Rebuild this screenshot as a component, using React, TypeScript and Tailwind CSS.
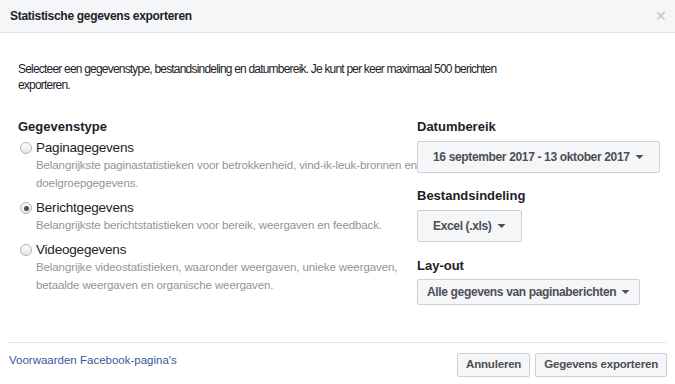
const font = { fontFamily: '"Liberation Sans", Arial, sans-serif' };

function Caret() {
  return (
    <svg width="9" height="6" viewBox="0 0 9 6" className="ml-[5px] inline-block shrink-0">
      <path d="M0.5 1 L8.5 1 L4.5 5 Z" fill="#4b4f56" />
    </svg>
  );
}

function Radio({ checked }: { checked?: boolean }) {
  return (
    <span className="mt-[3px] flex h-[12px] w-[12px] shrink-0 items-center justify-center rounded-full border border-[#b0b3b8] bg-gradient-to-b from-[#fdfdfd] to-[#e4e6e9]">
      {checked && <span className="h-[5px] w-[5px] rounded-full bg-[#4b4f56]" />}
    </span>
  );
}

function Option({ label, desc, checked }: { label: string; desc: string; checked?: boolean }) {
  return (
    <div className="flex gap-[4px]">
      <Radio checked={checked} />
      <div>
        <div className="text-[13.5px] leading-[17px] tracking-[-0.2px] text-[#1d2129]">{label}</div>
        <div className="text-[11.5px] leading-[18px] tracking-[-0.1px] text-[#90949c]">{desc}</div>
      </div>
    </div>
  );
}

function Select({ children, tall }: { children: string; tall?: boolean }) {
  return (
    <div
      className={`inline-flex items-center whitespace-nowrap rounded-[2px] border border-[#ced0d4] bg-[#f5f6f7] text-[12px] font-bold tracking-[-0.35px] text-[#4b4f56] ${
        tall ? "h-[32px] px-[15px]" : "h-[26px] px-[9px]"
      }`}
    >
      {children}
      <Caret />
    </div>
  );
}

const heading = "text-[13px] font-bold leading-[16px] text-[#1d2129]";
const button =
  "h-[24px] rounded-[2px] border border-[#ced0d4] bg-[#f5f6f7] px-[8px] text-[11.5px] font-bold tracking-[-0.2px] text-[#4b4f56]";

export default function App() {
  return (
    <div style={font} className="h-[384px] w-[675px] overflow-hidden bg-white">
      <div className="flex h-[33px] items-center justify-between border-b border-[#e5e5e5] bg-[#f5f6f7] pl-[10px] pr-[8px]">
        <span className="text-[12px] font-bold tracking-[-0.3px] text-[#1d2129]">Statistische gegevens exporteren</span>
        <span className="text-[14px] leading-none text-[#bec2c9]">✕</span>
      </div>

      <div className="px-[18px] pt-[28px]">
        <p className="max-w-[500px] text-[12px] leading-[16px] tracking-[-0.8px] text-[#1d2129]">
          Selecteer een gegevenstype, bestandsindeling en datumbereik. Je kunt per keer maximaal 500 berichten exporteren.
        </p>

        <div className="mt-[26px] flex">
          <div className="w-[405px] shrink-0">
            <div className={`mb-[4px] ${heading}`}>Gegevenstype</div>
            <div className="flex flex-col gap-[7px] pl-[2px]">
              <Option
                label="Paginagegevens"
                desc="Belangrijkste paginastatistieken voor betrokkenheid, vind-ik-leuk-bronnen en doelgroepgegevens."
              />
              <Option
                checked
                label="Berichtgegevens"
                desc="Belangrijkste berichtstatistieken voor bereik, weergaven en feedback."
              />
              <Option
                label="Videogegevens"
                desc="Belangrijke videostatistieken, waaronder weergaven, unieke weergaven, betaalde weergaven en organische weergaven."
              />
            </div>
          </div>

          <div className="relative z-10 -ml-[6px] flex flex-col items-start">
            <div className={`mb-[6px] ${heading}`}>Datumbereik</div>
            <Select tall>16 september 2017 - 13 oktober 2017</Select>
            <div className={`mb-[6px] mt-[15px] ${heading}`}>Bestandsindeling</div>
            <Select tall>Excel (.xls)</Select>
            <div className={`mb-[5px] mt-[16px] ${heading}`}>Lay-out</div>
            <Select>Alle gegevens van paginaberichten</Select>
          </div>
        </div>
      </div>

      <div className="mx-[8px] mt-[37px] flex items-start justify-between border-t border-[#e5e5e5] pt-[10px]">
        <a className="pl-[1px] text-[11.5px] leading-[14px] text-[#365899]">Voorwaarden Facebook-pagina's</a>
        <div className="flex gap-[5px]">
          <button className={button}>Annuleren</button>
          <button className={button}>Gegevens exporteren</button>
        </div>
      </div>
    </div>
  );
}
